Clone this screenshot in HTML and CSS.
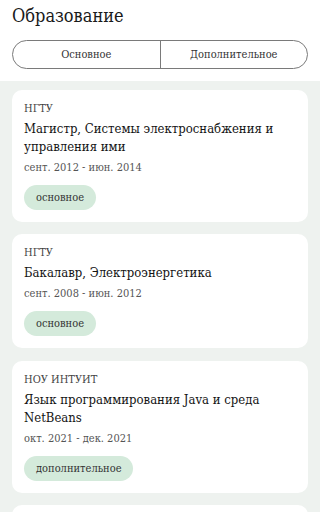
FILE: index.html
```html
<!DOCTYPE html>
<html lang="ru">
<head>
<meta charset="utf-8">
<link rel="stylesheet" href="styles.css">
</head>
<body>
<div class="top">
  <h1 class="title">Образование</h1>
  <div class="seg">
    <div class="seg-item">Основное</div>
    <div class="seg-item seg-right">Дополнительное</div>
  </div>
</div>
<div class="list">
  <div class="card">
    <div class="org">НГТУ</div>
    <div class="name">Магистр, Системы электроснабжения и управления ими</div>
    <div class="date">сент. 2012 - июн. 2014</div>
    <div class="badge">основное</div>
  </div>
  <div class="card">
    <div class="org">НГТУ</div>
    <div class="name">Бакалавр, Электроэнергетика</div>
    <div class="date">сент. 2008 - июн. 2012</div>
    <div class="badge">основное</div>
  </div>
  <div class="card card-gap">
    <div class="org">НОУ ИНТУИТ</div>
    <div class="name">Язык программирования Java и среда NetBeans</div>
    <div class="date">окт. 2021 - дек. 2021</div>
    <div class="badge">дополнительное</div>
  </div>
  <div class="card card-next"></div>
</div>
</body>
</html>
```
FILE: styles.css
```css
html, body {
  margin: 0;
  padding: 0;
  background: #ffffff;
  font-family: "DejaVu Serif", "Liberation Serif", serif;
  font-stretch: condensed;
  color: #1b1b1b;
  overflow: hidden;
  height: 512px;
}
.top {
  padding: 4px 12px 12px;
  background: #ffffff;
}
.title {
  margin: 0;
  font-size: 18px;
  font-weight: normal;
  line-height: 24px;
  color: #1a1a1a;
}
.seg {
  margin-top: 12px;
  height: 29px;
  box-sizing: border-box;
  border: 1px solid #7a7a7a;
  border-radius: 15px;
  display: flex;
}
.seg-item {
  flex: 1;
  display: flex;
  align-items: center;
  justify-content: center;
  font-size: 11px;
  color: #333;
}
.seg-right {
  border-left: 1px solid #7a7a7a;
}
.list {
  background: #eef2ef;
  padding: 9px 12px 12px;
  display: flex;
  flex-direction: column;
  gap: 12px;
  min-height: 420px;
}
.card {
  background: #ffffff;
  border-radius: 10px;
  padding: 12px;
  display: flex;
  flex-direction: column;
  align-items: flex-start;
}
.card-gap {
  margin-top: 1px;
}
.card-next {
  height: 60px;
  box-sizing: border-box;
}
.org {
  font-size: 11px;
  line-height: 14px;
  color: #444;
}
.name {
  margin-top: 4px;
  font-size: 13px;
  line-height: 18px;
  color: #141414;
}
.date {
  margin-top: 4px;
  font-size: 11px;
  line-height: 16px;
  color: #555;
}
.badge {
  margin-top: 9px;
  height: 25px;
  padding: 0 12px;
  border-radius: 13px;
  background: #d4eadb;
  font-size: 11px;
  line-height: 25px;
  color: #333;
}
```
